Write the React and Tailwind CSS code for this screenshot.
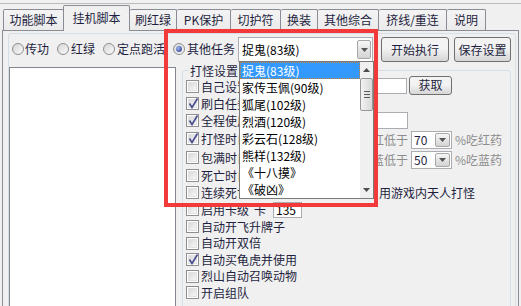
import React from "react";

const tabs = [
  { name: "功能脚本", w: "w-[61px]" },
  { name: "挂机脚本", w: "w-[67px]", active: true },
  { name: "刷红绿", w: "w-[47px]" },
  { name: "PK保护", w: "w-[54px]" },
  { name: "切护符", w: "w-[50px]" },
  { name: "换装", w: "w-[37px]" },
  { name: "其他综合", w: "w-[61px]" },
  { name: "挤线/重连", w: "w-[68px]" },
  { name: "说明", w: "w-[39px]" },
];

const quests = [
  "捉鬼(83级)",
  "家传玉佩(90级)",
  "狐尾(102级)",
  "烈酒(120级)",
  "彩云石(128级)",
  "熊样(132级)",
  "《十八摸》",
  "《破凶》",
];

const Check = ({ on }) => (
  <span className="relative flex h-[13px] w-[13px] shrink-0 items-center justify-center border border-[#8f8f8f] bg-white">
    <span className="h-[9px] w-[9px] border border-[#e2e2e2] bg-linear-to-br from-[#d9d9d9] to-[#f8f8f8]" />
    {on && (
      <svg className="absolute left-[1px] top-[0px]" width="11" height="11" viewBox="0 0 11 11">
        <path d="M1.5 5.5 L4 9.5 L9.5 0.5" fill="none" stroke="#4b4f8f" strokeWidth="1.7" />
      </svg>
    )}
  </span>
);

const Radio = ({ on }) => (
  <span className="flex h-[12px] w-[12px] shrink-0 items-center justify-center rounded-full border border-[#8e8f8f] bg-linear-to-br from-[#d5d5d5] to-[#fbfbfb]">
    {on && <span className="h-[6px] w-[6px] rounded-full bg-[radial-gradient(circle_at_35%_35%,#9fb5ef,#1b2f85)]" />}
  </span>
);

const Arrow = ({ className }) => (
  <span className={`flex shrink-0 items-center justify-center rounded-[2px] border border-[#a7a7a7] bg-linear-to-b from-[#f6f6f6] to-[#d4d4d4] ${className}`}>
    <svg width="7" height="4" viewBox="0 0 7 4">
      <path d="M0 0 H7 L3.5 4 Z" fill="#555" />
    </svg>
  </span>
);

const Btn = ({ children, className }) => (
  <div className={`flex items-center justify-center rounded-[3px] border border-[#707070] bg-linear-to-b from-[#f3f3f3] from-45% to-[#d6d6d6] ${className}`}>
    {children}
  </div>
);

const Select = ({ value }) => (
  <div className="flex h-[18px] w-[41px] items-center justify-between border border-[#abadb3] bg-white pl-[2px] pr-[1px] text-[#1f1f3f]">
    <span>{value}</span>
    <Arrow className="h-[14px] w-[15px]" />
  </div>
);

const Row = ({ h, on, children }) => (
  <div className={`flex items-center ${h}`}>
    <Check on={on} />
    <div className="ml-[2px] flex items-center">{children}</div>
  </div>
);

const Dropdown = () => (
  <div className="absolute left-0 top-full z-20 flex h-[138px] w-[135px] border border-[#7a7a7a] bg-white">
    <div className="flex flex-1 flex-col">
      {quests.map((q, i) => (
        <div
          key={q}
          className={
            i === 0
              ? "flex h-[17px] items-center border border-dotted border-[#c8802e] bg-[#3399ff] pl-[1px] text-white"
              : "flex h-[17px] items-center pl-[2px] text-black"
          }
        >
          {q}
        </div>
      ))}
    </div>
    <div className="flex w-[13px] flex-col bg-[#f0f0f0]">
      <div className="flex h-[16px] items-center justify-center">
        <svg width="7" height="4" viewBox="0 0 7 4">
          <path d="M0 4 H7 L3.5 0 Z" fill="#4d4d4d" />
        </svg>
      </div>
      <div className="flex h-[33px] flex-col items-center justify-center gap-[2px] rounded-[2px] border border-[#979797] bg-linear-to-r from-[#f2f2f2] to-[#d8d8d8]">
        <span className="h-px w-[6px] bg-[#5a5a5a]" />
        <span className="h-px w-[6px] bg-[#5a5a5a]" />
        <span className="h-px w-[6px] bg-[#5a5a5a]" />
      </div>
      <div className="flex-1" />
      <div className="flex h-[16px] items-center justify-center">
        <svg width="7" height="4" viewBox="0 0 7 4">
          <path d="M0 0 H7 L3.5 4 Z" fill="#4d4d4d" />
        </svg>
      </div>
    </div>
  </div>
);

export default function App() {
  return (
    <div className="relative h-[306px] w-[521px] overflow-hidden bg-[#f0f0f0] font-['Noto_Sans_CJK_SC',sans-serif] text-[12px] leading-none text-[#1f1f3f]">
      <div className="h-[3px]" />
      <div className="h-px bg-[#bcbcbc]" />

      {/* tabs */}
      <div className="flex h-[26px] items-end pl-[3px]">
        {tabs.map((t, i) =>
          t.active ? (
            <div
              key={t.name}
              className={`relative z-10 -mb-px -ml-px flex h-[26px] items-center justify-center rounded-t-[2px] border-x border-t border-[#898c95] bg-[#f0f0f0] pb-[2px] ${t.w}`}
            >
              {t.name}
            </div>
          ) : (
            <div
              key={t.name}
              className={`flex h-[21px] items-center justify-center rounded-t-[2px] border-r border-t border-[#898c95] bg-linear-to-b from-[#f4f4f4] to-[#ebebeb] ${i === 0 ? "border-l" : ""} ${t.w}`}
            >
              {t.name}
            </div>
          )
        )}
      </div>

      {/* tab page */}
      <div className="ml-[2px] h-[290px] w-[517px] border border-[#898c95] pl-[5px] pr-[2px] pt-[2px]">
        <div className="h-[300px] rounded-[3px] border border-[#d5dfe5]">
          {/* mode row */}
          <div className="flex h-[28px] items-start pl-[3px] pt-[2px]">
            <div className="flex h-[26px] w-[45px] items-center">
              <Radio />
              <span className="ml-[1px]">传功</span>
            </div>
            <div className="flex h-[26px] w-[46px] items-center">
              <Radio />
              <span className="ml-[2px]">红绿</span>
            </div>
            <div className="flex h-[26px] w-[70px] items-center">
              <Radio />
              <span className="ml-[2px]">定点跑活</span>
            </div>
            <div className="flex h-[26px] w-[65px] items-center">
              <Radio on />
              <span className="ml-[2px]">其他任务</span>
            </div>
            <div className="relative mt-[1px] flex h-[25px] w-[135px] items-center justify-between border border-[#abadb3] bg-white pl-[3px] pr-px text-black">
              <span>捉鬼(83级)</span>
              <Arrow className="h-[19px] w-[14px]" />
              <Dropdown />
            </div>
            <Btn className="ml-[8px] mt-[1px] h-[25px] w-[68px]">开始执行</Btn>
            <Btn className="ml-[5px] mt-[1px] h-[25px] w-[57px]">保存设置</Btn>
          </div>

          {/* lower area */}
          <div className="mt-[5px] flex items-start">
            <div className="h-[250px] w-[167px] border border-[#828790] bg-white" />

            <div className="relative ml-[6px] mt-[3px] h-[250px] w-[329px] rounded-[3px] border border-[#d5dfe5] pl-[3px] pt-[7px]">
              <span className="absolute left-[6px] top-[-8px] bg-[#f0f0f0] px-px leading-[16px]">打怪设置</span>

              <Row h="h-[17px]">
                <span className="w-[149px] overflow-hidden whitespace-nowrap">自己设置打怪坐标</span>
                <div className="-mt-[2px] flex h-[16px] w-[57px] items-center border border-[#abadb3] bg-white pl-[2px] text-black">1</div>
                <Btn className="-mt-[3px] ml-[2px] h-[19px] w-[43px]">获取</Btn>
              </Row>
              <Row h="h-[17px]" on>
                <span className="whitespace-nowrap">刷白任务自动清包</span>
              </Row>
              <Row h="h-[17px]" on>
                <span className="w-[149px] overflow-hidden whitespace-nowrap">全程使用加速</span>
                <div className="h-[17px] w-[58px] border border-[#abadb3] bg-white" />
              </Row>
              <Row h="h-[19px]" on>
                <span className="w-[171px] overflow-hidden whitespace-nowrap">打怪时自动吃药</span>
                <span className="mt-[3px] w-[36px] text-right text-[#8d8d8d]">红低于</span>
                <div className="ml-[3px] mt-[3px]">
                  <Select value="70" />
                </div>
                <span className="ml-[3px] mt-[3px] text-[#8d8d8d]">%吃红药</span>
              </Row>
              <Row h="h-[19px]">
                <span className="w-[171px] overflow-hidden whitespace-nowrap">包满时自动回城</span>
                <span className="mt-[5px] w-[36px] text-right text-[#8d8d8d]">蓝低于</span>
                <div className="ml-[3px] mt-[5px]">
                  <Select value="50" />
                </div>
                <span className="ml-[3px] mt-[5px] text-[#8d8d8d]">%吃蓝药</span>
              </Row>
              <Row h="h-[17px]">
                <span className="whitespace-nowrap">死亡时自动复活</span>
              </Row>
              <Row h="h-[17px]">
                <span className="w-[178px] overflow-hidden whitespace-nowrap">连续死亡超过三次后停止</span>
                <span className="whitespace-nowrap">用游戏内天人打怪</span>
              </Row>
              <Row h="h-[17px]">
                <span>启用卡级</span>
                <span className="ml-[5px]">卡</span>
                <div className="ml-[7px] flex h-[16px] w-[29px] items-center border border-[#abadb3] bg-white pl-[2px] text-black">135</div>
              </Row>
              <Row h="h-[17px]">
                <span>自动开飞升牌子</span>
              </Row>
              <Row h="h-[16px]">
                <span>自动开双倍</span>
              </Row>
              <Row h="h-[17px]" on>
                <span>自动买龟虎并使用</span>
              </Row>
              <Row h="h-[16px]">
                <span>烈山自动召唤动物</span>
              </Row>
              <Row h="h-[17px]">
                <span>开启组队</span>
              </Row>
            </div>
          </div>
        </div>
      </div>

      {/* annotation box */}
      <div className="absolute left-[164px] top-[29px] z-30 h-[178px] w-[214px] border-[4px] border-[#f33a3a]" />
    </div>
  );
}
